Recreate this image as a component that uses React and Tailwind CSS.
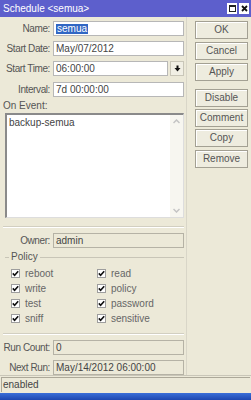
import React from "react";

const font = { fontFamily: '"Liberation Sans", Arial, sans-serif' };

const Field = ({ label, value, disabled, selected, className = "" }) => (
  <div className={`grid grid-cols-[47px_1fr] gap-x-[3px] items-center h-[15px] ${className}`}>
    <span className="text-right text-[#555] whitespace-nowrap tracking-[-0.4px]">{label}</span>
    <div
      className={`h-[15px] border flex items-center px-[2px] text-[#444] whitespace-nowrap overflow-hidden ${
        disabled ? "bg-[#ece9d8] border-[#b5b2a5]" : "bg-white border-[#b7b7b7]"
      }`}
    >
      {selected ? <span className="bg-[#3167c4] text-white px-[1px]">{value}</span> : value}
    </div>
  </div>
);

const Btn = ({ children, className = "" }) => (
  <div
    className={`w-[53px] h-[18px] border border-[#a3a093] bg-[#eeecdf] shadow-[inset_1px_1px_0_#fff] flex items-center justify-center text-[#555] ${className}`}
  >
    {children}
  </div>
);

const Check = ({ label }) => (
  <div className="flex items-center h-[15px] gap-[5px]">
    <div className="w-[9px] h-[9px] bg-white border border-[#9d9d9d] flex items-center justify-center">
      <svg width="7" height="7" viewBox="0 0 7 7">
        <path d="M0.8 3.4 L2.6 5.3 L6.2 1.2" stroke="#111" strokeWidth="1.6" fill="none" />
      </svg>
    </div>
    <span className="text-[#666]">{label}</span>
  </div>
);

export default function App() {
  return (
    <div style={font} className="w-[251px] h-[400px] bg-[#ece9d8] flex flex-col text-[10px] leading-none overflow-hidden">
      {/* Title bar */}
      <div className="h-[17px] bg-[#5d5fcc] flex items-center justify-between pl-[3px] pr-[2px]">
        <span className="text-white text-[10px]">Schedule &lt;semua&gt;</span>
        <div className="flex gap-[2px]">
          <div className="w-[10px] h-[11px] bg-white flex items-center justify-center">
            <div className="w-[7px] h-[7px] border border-[#222] border-t-2"></div>
          </div>
          <div className="w-[10px] h-[11px] bg-white flex items-center justify-center">
            <svg width="7" height="7" viewBox="0 0 7 7">
              <path d="M1 1 L6 6 M6 1 L1 6" stroke="#111" strokeWidth="1.8" />
            </svg>
          </div>
        </div>
      </div>

      {/* Main */}
      <div className="flex h-[358px]">
        <div className="w-[186px] pl-[3px] pr-[2px] pt-[4px] flex flex-col">
          <Field label="Name:" value="semua" selected />
          <Field label="Start Date:" value="May/07/2012" className="mt-[5px]" />
          <div className="grid grid-cols-[47px_1fr] gap-x-[3px] items-center h-[15px] mt-[5px]">
            <span className="text-right text-[#555] whitespace-nowrap tracking-[-0.4px]">Start Time:</span>
            <div className="flex gap-[2px]">
              <div className="flex-1 h-[15px] bg-white border border-[#b7b7b7] flex items-center px-[2px] text-[#444]">06:00:00</div>
              <div className="w-[14px] h-[15px] border border-[#c9c6b8] bg-[#f1efe4] flex items-center justify-center">
                <svg width="7" height="7" viewBox="0 0 7 7">
                  <path d="M2.5 0.5 H4.5 V3 H6.5 L3.5 6.5 L0.5 3 H2.5 Z" fill="#111" />
                </svg>
              </div>
            </div>
          </div>
          <Field label="Interval:" value="7d 00:00:00" className="mt-[6px]" />

          <div className="mt-[4px] h-[11px] flex items-center text-[#555]">On Event:</div>
          <div className="ml-[2px] mt-[1px] h-[106px] bg-white border-t-2 border-l-2 border-[#8a8a8a] border-r border-b border-r-[#ddd] border-b-[#ddd] flex">
            <div className="flex-1 pl-[2px] pt-[3px] text-[#444]">backup-semua</div>
            <div className="w-[13px] bg-[#f7f6f0] flex flex-col justify-between items-center py-[4px]">
              <svg width="7" height="5" viewBox="0 0 7 5">
                <path d="M0.5 4 L3.5 1 L6.5 4" stroke="#c4c4c4" strokeWidth="1.5" fill="none" />
              </svg>
              <svg width="7" height="5" viewBox="0 0 7 5">
                <path d="M0.5 1 L3.5 4 L6.5 1" stroke="#c4c4c4" strokeWidth="1.5" fill="none" />
              </svg>
            </div>
          </div>

          <div className="mt-[8px] border-t border-[#d2cfc1] shadow-[0_1px_0_#fff]"></div>
          <Field label="Owner:" value="admin" disabled className="mt-[6px]" />

          <div className="mt-[3px] h-[12px] flex items-center gap-[2px]">
            <div className="w-[4px] border-t border-[#c8c5b7] ml-[2px]"></div>
            <span className="text-[#555]">Policy</span>
            <div className="flex-1 border-t border-[#c8c5b7]"></div>
          </div>
          <div className="mt-[3px] grid grid-cols-[86px_1fr] pl-[8px]">
            <Check label="reboot" />
            <Check label="read" />
            <Check label="write" />
            <Check label="policy" />
            <Check label="test" />
            <Check label="password" />
            <Check label="sniff" />
            <Check label="sensitive" />
          </div>

          <div className="mt-[7px] border-t border-[#d2cfc1] shadow-[0_1px_0_#fff]"></div>
          <Field label="Run Count:" value="0" disabled className="mt-[6px]" />
          <Field label="Next Run:" value="May/14/2012 06:00:00" disabled className="mt-[5px]" />
        </div>

        <div className="flex-1 border-l border-[#d9d6c8] pl-[8px] pt-[4px] flex flex-col">
          <Btn>OK</Btn>
          <Btn className="mt-[3px]">Cancel</Btn>
          <Btn className="mt-[3px]">Apply</Btn>
          <Btn className="mt-[8px]">Disable</Btn>
          <Btn className="mt-[2px]">Comment</Btn>
          <Btn className="mt-[2px]">Copy</Btn>
          <Btn className="mt-[3px]">Remove</Btn>
        </div>
      </div>

      {/* Status bar */}
      <div className="h-[18px] border-t border-[#c9c6b8] flex items-center px-[1px]">
        <div className="flex-1 h-[15px] border-l border-t border-[#aca899] flex items-center pl-[1px] text-[#444]">enabled</div>
      </div>
      <div className="h-[7px] bg-gradient-to-b from-[#3a6ed8] to-[#1d46b0]"></div>
    </div>
  );
}
